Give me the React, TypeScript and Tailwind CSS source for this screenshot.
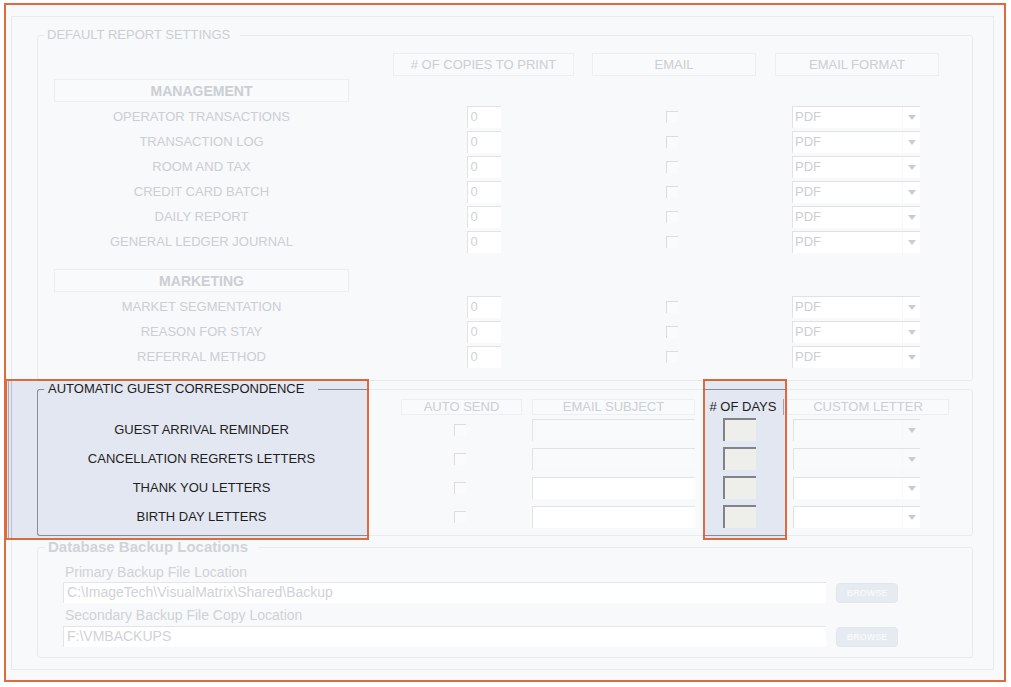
import clsx from "clsx";

const management = [
  "OPERATOR TRANSACTIONS",
  "TRANSACTION LOG",
  "ROOM AND TAX",
  "CREDIT CARD BATCH",
  "DAILY REPORT",
  "GENERAL LEDGER JOURNAL",
];

const marketing = ["MARKET SEGMENTATION", "REASON FOR STAY", "REFERRAL METHOD"];

const letters = [
  { name: "GUEST ARRIVAL REMINDER", dim: true },
  { name: "CANCELLATION REGRETS LETTERS", dim: true },
  { name: "THANK YOU LETTERS", dim: false },
  { name: "BIRTH DAY LETTERS", dim: false },
];

function Arrow() {
  return (
    <svg width="8" height="5" viewBox="0 0 8 5">
      <path d="M0 0h8L4 5z" fill="#c9ccd1" />
    </svg>
  );
}

function Checkbox() {
  return (
    <div className="h-[12px] w-[12px] border-t border-l border-[#d9dce0] bg-[#fbfbfc]" />
  );
}

function Select({ value, dim, className }: { value?: string; dim?: boolean; className: string }) {
  return (
    <div
      className={clsx(
        "flex h-[22px] border-t border-l border-[#dfe2e6]",
        dim ? "bg-[#f9fafb]" : "bg-white",
        className
      )}
    >
      <span className="flex-1 pl-[2px] text-[13px] leading-[20px] text-[#cbced3]">{value}</span>
      <span className="flex w-[18px] items-center justify-center border-l border-[#f6f7f8]">
        <Arrow />
      </span>
    </div>
  );
}

function HeaderBox({ label, className, bold }: { label: string; className: string; bold?: boolean }) {
  return (
    <div
      className={clsx(
        "flex items-center justify-center border border-[#eceef1] bg-[#f9fafb] text-[#cbced3]",
        bold ? "text-[14px] font-bold" : "text-[13px]",
        className
      )}
    >
      {label}
    </div>
  );
}

function ReportRow({ label }: { label: string }) {
  return (
    <div className="flex h-[25px] items-center">
      <div className="ml-[16px] w-[295px] text-center text-[13px] text-[#cbced3]">{label}</div>
      <div className="ml-[44px] flex w-[181px] justify-center">
        <div className="h-[22px] w-[34px] border-t border-l border-[#e0e3e7] bg-white pl-[3px] text-[13px] leading-[20px] text-[#cfd2d6]">
          0
        </div>
      </div>
      <div className="ml-[18px] w-[164px]">
        <div className="ml-[74px]">
          <Checkbox />
        </div>
      </div>
      <div className="ml-[19px] w-[164px]">
        <Select value="PDF" className="ml-[17px] w-[128px]" />
      </div>
    </div>
  );
}

function LetterRow({ name, dim }: { name: string; dim: boolean }) {
  return (
    <div className="flex h-[29px] items-center">
      <div className="ml-[16px] w-[295px] text-center text-[13px] text-[#1f1f1f]">{name}</div>
      <div className="ml-[52px] w-[121px]">
        <div className="ml-[53px]">
          <Checkbox />
        </div>
      </div>
      <div
        className={clsx(
          "ml-[10px] h-[22px] w-[163px] border-t border-l border-[#e0e3e7]",
          dim ? "bg-[#f9fafb]" : "bg-white"
        )}
      />
      <div className="ml-[8px] w-[81px]">
        <div className="ml-[20px] h-[23px] w-[33px] border-t-2 border-l-2 border-[#808388] bg-[#eeefeb]" />
      </div>
      <div className="ml-[3px] w-[162px]">
        <Select dim={dim} className="ml-[6px] w-[127px]" />
      </div>
    </div>
  );
}

export default function App() {
  return (
    <div className="min-h-screen bg-white font-['Liberation_Sans',Arial,sans-serif] text-[13px] leading-[16px]">
      <div className="relative isolate ml-[4px] mt-[3px] w-[1002px] border-2 border-[#de6a3e] bg-[#f8f9fb] pb-[10px]">
        {/* highlight boxes */}
        <div className="pointer-events-none absolute -left-px top-[374px] -z-10 h-[161px] w-[364px] border-2 border-[#de6a3e] bg-[#e3e7f1]">
          <div className="absolute top-0 bottom-0 left-[1px] w-px bg-[#a6adb8]" />
          <div className="absolute top-0 bottom-0 left-[4px] w-px bg-[#c8ced8]" />
          <div className="absolute left-[30px] right-0 top-[8px] h-[147px] rounded-l-[3px] border-y border-l border-[#8f96a0]" />
          <div className="absolute left-[37px] top-[3px] h-[10px] w-[274px] bg-[#e3e7f1]" />
        </div>
        <div className="pointer-events-none absolute left-[697px] top-[374px] -z-10 h-[161px] w-[84px] border-2 border-[#de6a3e] bg-[#e3e7f1]">
          <div className="absolute left-0 right-0 top-[8px] h-px bg-[#8f96a0]" />
          <div className="absolute left-0 right-0 top-[154px] h-px bg-[#8f96a0]" />
        </div>

        <div className="ml-[5px] mt-[11px] w-[983px] border border-black/[0.06] pt-[10px] pr-[20px] pb-[11px] pl-[25px]">
          {/* default report settings */}
          <fieldset className="w-[936px] rounded-[3px] border border-black/[0.06] pt-[10px] pb-[11px]">
            <legend className="ml-[6px] pl-[3px] pr-[10px] leading-[16px] text-[#cbced3]">
              DEFAULT REPORT SETTINGS
            </legend>
            <div className="flex h-[23px]">
              <div className="ml-[16px] w-[295px]" />
              <HeaderBox label="# OF COPIES TO PRINT" className="ml-[44px] w-[181px]" />
              <HeaderBox label="EMAIL" className="ml-[18px] w-[164px]" />
              <HeaderBox label="EMAIL FORMAT" className="ml-[19px] w-[164px]" />
            </div>
            <HeaderBox label="MANAGEMENT" bold className="ml-[16px] mt-[3px] h-[23px] w-[295px]" />
            <div className="mt-[2px]">
              {management.map((m) => (
                <ReportRow key={m} label={m} />
              ))}
            </div>
            <HeaderBox label="MARKETING" bold className="ml-[16px] mt-[15px] h-[23px] w-[295px]" />
            <div className="mt-[2px]">
              {marketing.map((m) => (
                <ReportRow key={m} label={m} />
              ))}
            </div>
          </fieldset>

          {/* automatic guest correspondence */}
          <fieldset className="w-[936px] rounded-[3px] border border-black/[0.06] pt-[2px] pb-[4px]">
            <legend className="ml-[7px] pl-[3px] pr-[14px] leading-[16px] text-[#1c1c1c]">
              AUTOMATIC GUEST CORRESPONDENCE
            </legend>
            <div className="flex h-[16px]">
              <div className="ml-[16px] w-[295px]" />
              <HeaderBox label="AUTO SEND" className="ml-[52px] w-[121px]" />
              <HeaderBox label="EMAIL SUBJECT" className="ml-[10px] w-[163px]" />
              <div className="ml-[8px] flex w-[81px] items-center justify-center border-r border-[#9ea4ad] text-[13px] text-[#1c1c1c]">
                # OF DAYS
              </div>
              <HeaderBox label="CUSTOM LETTER" className="ml-[3px] w-[162px]" />
            </div>
            {letters.map((l) => (
              <LetterRow key={l.name} name={l.name} dim={l.dim} />
            ))}
          </fieldset>

          {/* database backup */}
          <fieldset className="mt-[2px] w-[936px] rounded-[3px] border border-black/[0.06] pb-[10px]">
            <legend className="ml-[7px] pl-[3px] pr-[10px] text-[15px] font-bold leading-[18px] text-[#d0d3d8]">
              Database Backup Locations
            </legend>
            <div className="ml-[25px] mt-[8px] pl-[2px] text-[14px] leading-[16px] text-[#cfd2d6]">
              Primary Backup File Location
            </div>
            <div className="ml-[25px] mt-[2px] flex items-center">
              <div className="h-[21px] w-[763px] border-t border-l border-[#e3e5e9] bg-white pl-[3px] text-[14px] leading-[19px] text-[#cfd2d6]">
                C:\ImageTech\VisualMatrix\Shared\Backup
              </div>
              <button className="ml-[10px] h-[20px] w-[62px] rounded-[4px] border border-[#e2e7ee] bg-[#e6ebf2] text-[9px] font-bold text-[#f6f8fb]">
                BROWSE
              </button>
            </div>
            <div className="ml-[25px] mt-[4px] pl-[2px] text-[14px] leading-[16px] text-[#cfd2d6]">
              Secondary Backup File Copy Location
            </div>
            <div className="ml-[25px] mt-[3px] flex items-center">
              <div className="h-[21px] w-[763px] border-t border-l border-[#e3e5e9] bg-white pl-[3px] text-[14px] leading-[19px] text-[#cfd2d6]">
                F:\VMBACKUPS
              </div>
              <button className="ml-[10px] h-[20px] w-[62px] rounded-[4px] border border-[#e2e7ee] bg-[#e6ebf2] text-[9px] font-bold text-[#f6f8fb]">
                BROWSE
              </button>
            </div>
          </fieldset>
        </div>
      </div>
    </div>
  );
}
